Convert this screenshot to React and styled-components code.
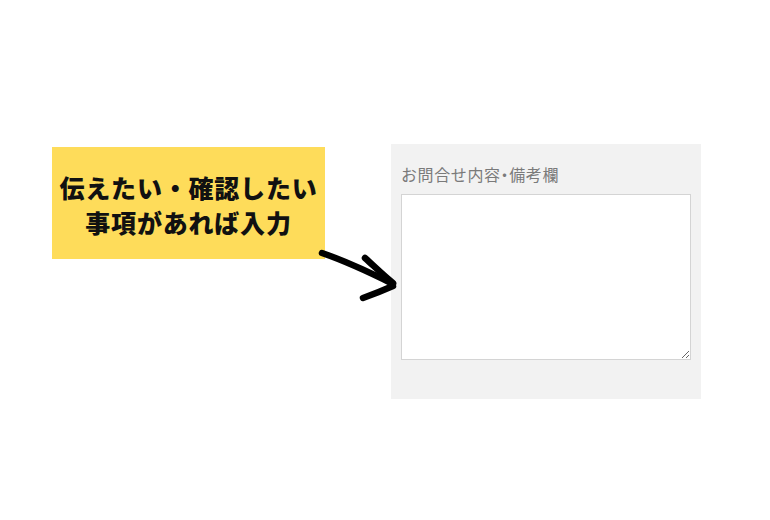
import styled, { createGlobalStyle } from "styled-components";

const Global = createGlobalStyle`
  html, body { margin: 0; padding: 0; background: #fff; }
  body { font-family: "Noto Sans CJK JP", "Noto Sans", sans-serif; }
`;

const Stage = styled.div`
  width: 770px;
  height: 520px;
  box-sizing: border-box;
  padding: 144px 0 0 52px;
  display: flex;
  align-items: flex-start;
  position: relative;
`;

const Callout = styled.div`
  margin-top: 3px;
  width: 273px;
  height: 112px;
  background: #fedc5a;
  display: flex;
  flex-direction: column;
  justify-content: center;
  align-items: center;
  padding: 4px 0 0 0;
  box-sizing: border-box;
  font-weight: 900;
  font-size: 25px;
  letter-spacing: 0.8px;
  line-height: 35px;
  color: #111;
  white-space: nowrap;
`;

const Gap = styled.div`
  width: 66px;
  flex: none;
`;

const Arrow = styled.svg`
  position: absolute;
  left: 318px;
  top: 248px;
  overflow: visible;
`;

const Panel = styled.div`
  width: 310px;
  height: 255px;
  background: #f2f2f2;
  padding: 19px 10px 0;
  box-sizing: border-box;
  display: flex;
  flex-direction: column;
  gap: 9px;
`;

const Label = styled.label`
  font-size: 16px;
  color: #7a7a7a;
  line-height: 22px;
  letter-spacing: 0.6px;
`;

const Dot = styled.span`
  font-feature-settings: "palt";
`;

const Field = styled.textarea`
  width: 290px;
  height: 166px;
  box-sizing: border-box;
  border: 1px solid #d4d4d4;
  background: #fff;
  margin: 0;
  padding: 4px;
  font: inherit;
  resize: vertical;
  outline: none;
`;

export default function App() {
  return (
    <>
      <Global />
      <Stage>
        <Callout>
          <div>伝えたい・確認したい</div>
          <div>事項があれば入力</div>
        </Callout>
        <Gap />
        <Arrow width="80" height="56" viewBox="0 0 80 56">
          <g fill="none" stroke="#000" strokeWidth="6.5" strokeLinecap="round" strokeLinejoin="round">
            <path d="M4 5 C 30 14, 55 26, 75 36" />
            <path d="M47 10 C 58 20, 66 28, 75 35" />
            <path d="M45 50 C 56 46, 66 42, 75 38" />
          </g>
        </Arrow>
        <Panel>
          <Label htmlFor="memo">お問合せ内容<Dot>・</Dot>備考欄</Label>
          <Field id="memo" />
        </Panel>
      </Stage>
    </>
  );
}
